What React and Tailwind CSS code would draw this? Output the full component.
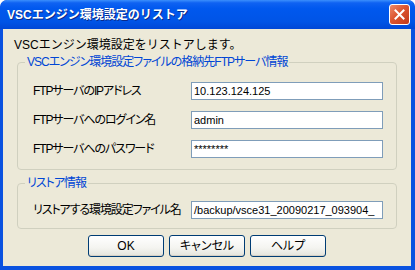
import React from 'react';

const font = { fontFamily: '"Liberation Sans","Noto Sans CJK JP",sans-serif' };

function Field({ label, value }) {
  return (
    <div className="flex items-center h-[18px]">
      <span className="w-[158px] shrink-0 whitespace-nowrap text-[12px] leading-[14px] text-black [font-feature-settings:'palt'] tracking-[-1.1px]">
        {label}
      </span>
      <div className="w-[192px] shrink-0 h-[18px] border border-[#7f9db9] bg-white flex items-center px-[2px] overflow-hidden whitespace-nowrap text-[11px] leading-[14px] text-black">
        <span className="shrink-0">{value}</span>
      </div>
    </div>
  );
}

function XpButton({ children }) {
  return (
    <button className="w-[76px] h-[22px] rounded-[3px] border border-[#003c74] bg-[linear-gradient(to_bottom,#ffffff_0%,#f4f4f0_60%,#e3e3db_100%)] text-[12px] leading-[14px] text-black shadow-[inset_0_-1px_0_#d6d0c5] [font-feature-settings:'palt']">
      {children}
    </button>
  );
}

export default function App() {
  return (
    <div style={font} className="w-[415px] h-[270px] bg-[#0a52e0] rounded-t-[7px] flex flex-col overflow-hidden">
      {/* title bar */}
      <div className="h-[29px] shrink-0 flex items-center justify-between pl-[7px] pr-[5px] rounded-t-[7px] bg-[linear-gradient(to_bottom,#3b8ffc_0%,#0f62f2_10%,#0058ee_30%,#0054e6_75%,#0047d6_100%)]">
        <span className="text-white font-bold text-[12px] leading-[14px] [text-shadow:1px_1px_0_#0a2a8a]">
          VSCエンジン環境設定のリストア
        </span>
        <div className="w-[21px] h-[21px] rounded-[3px] border border-white bg-[linear-gradient(135deg,#ee8a6a_0%,#dc5530_45%,#c2381a_100%)] flex items-center justify-center">
          <svg width="11" height="11" viewBox="0 0 11 11">
            <path d="M1.5 1.5 L9.5 9.5 M9.5 1.5 L1.5 9.5" stroke="#fff" strokeWidth="2" strokeLinecap="square" />
          </svg>
        </div>
      </div>

      {/* body */}
      <div className="flex-1 ml-[3px] mr-[4px] mb-[4px] bg-[#ece9d8] flex flex-col">
        <p className="mt-[9px] ml-[11px] text-[12px] leading-[14px] text-black">
          VSCエンジン環境設定をリストアします。
        </p>

        <fieldset className="mt-[3px] ml-[14px] w-[380px] border border-[#d0d0bf] rounded-[4px]">
          <legend className="ml-[7px] px-[2px] text-[12px] leading-[14px] text-[#0046d5] [font-feature-settings:'palt'] tracking-[-1px]">
            VSCエンジン環境設定ファイルの格納先FTPサーバ情報
          </legend>
          <div className="pl-[15px] pt-[13px] pb-[11px] flex flex-col gap-[11px]">
            <Field label="FTPサーバのIPアドレス" value="10.123.124.125" />
            <Field label="FTPサーバへのログイン名" value="admin" />
            <Field label="FTPサーバへのパスワード" value="********" />
          </div>
        </fieldset>

        <fieldset className="mt-[6px] ml-[14px] w-[380px] border border-[#d0d0bf] rounded-[4px]">
          <legend className="ml-[7px] px-[2px] text-[12px] leading-[14px] text-[#0046d5] [font-feature-settings:'palt'] tracking-[-1px]">
            リストア情報
          </legend>
          <div className="pl-[15px] pt-[11px] pb-[9px] flex flex-col">
            <Field label="リストアする環境設定ファイル名" value="/backup/vsce31_20090217_093904_" />
          </div>
        </fieldset>

        <div className="mt-[6px] flex justify-center gap-[5px]">
          <XpButton>OK</XpButton>
          <XpButton>キャンセル</XpButton>
          <XpButton>ヘルプ</XpButton>
        </div>
      </div>
    </div>
  );
}
